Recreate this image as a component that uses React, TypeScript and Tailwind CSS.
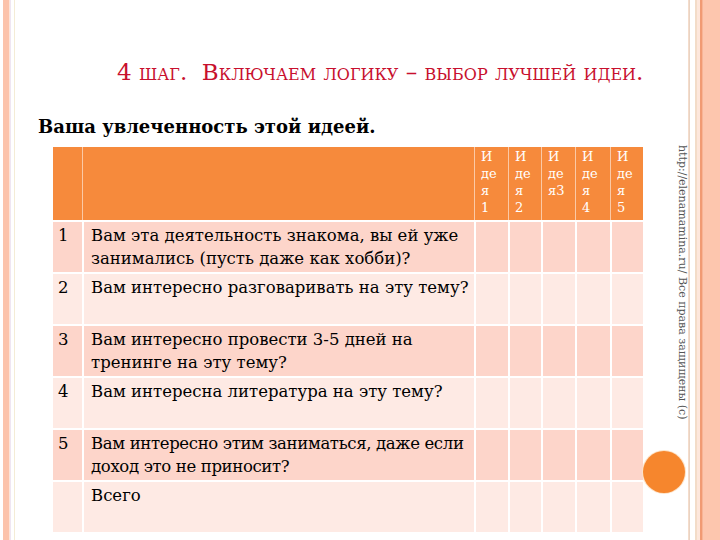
const rows = [
  { n: '1', lines: ['Вам эта деятельность знакома, вы ей уже', 'занимались (пусть даже как хобби)?'], dark: true, tight: false },
  { n: '2', lines: ['Вам интересно разговаривать на эту тему?'], dark: false, tight: false },
  { n: '3', lines: ['Вам интересно провести 3-5 дней на', 'тренинге на эту тему?'], dark: true, tight: false },
  { n: '4', lines: ['Вам интересна литература на эту тему?'], dark: false, tight: false },
  { n: '5', lines: ['Вам интересно этим заниматься, даже если', 'доход это не приносит?'], dark: true, tight: true },
  { n: '', lines: ['Всего'], dark: false, tight: false },
];

const ideas = [
  ['И', 'де', 'я', '1'],
  ['И', 'де', 'я', '2'],
  ['И', 'де', 'я3'],
  ['И', 'де', 'я', '4'],
  ['И', 'де', 'я', '5'],
];

const cols = 'grid grid-cols-[29px_392px_34px_33px_34px_35px_33px]';

const App = () => {
  return (
    <div
      className="flex h-[540px] w-[720px] overflow-hidden bg-white text-black"
      style={{ fontFamily: '"DejaVu Serif", "Liberation Serif", serif' }}
    >
      {/* left stripes */}
      <div className="flex h-full w-[16px] shrink-0">
        <div className="w-[3px] bg-white" />
        <div className="w-[6px] bg-[#fcc3ab]" />
        <div className="w-[1px] bg-[#fde3d8]" />
        <div className="w-[1px] bg-[#efe6f2]" />
        <div className="w-[3px] bg-white" />
        <div className="w-[1px] bg-[#f4ecd6]" />
      </div>

      <div className="flex flex-1 flex-col">
        <div className="pt-[57px] pl-[101px] text-[23px] leading-[30px] text-[#c8102e] [font-variant:small-caps]">
          4 шаг.&nbsp; Включаем логику – выбор лучшей идеи.
        </div>
        <div className="mt-[28px] pl-[22px] text-[18px] font-bold leading-[24px]">
          Ваша увлеченность этой идеей.
        </div>

        <div className="mt-[8px] flex pl-[37px]">
          <div className="w-[590px] text-[16.5px]">
            <div className={`${cols} h-[73px] bg-[#f68a3c] text-[13px] leading-[17px] text-white`}>
              <div />
              <div className="border-l border-[#fbc9a6]" />
              {ideas.map((lines, i) => (
                <div key={i} className="border-l border-[#fbc9a6] pl-[6px] pt-[1px]">
                  {lines.map((l, j) => (
                    <div key={j}>{l}</div>
                  ))}
                </div>
              ))}
            </div>
            {rows.map((r, i) => (
              <div
                key={i}
                className={`${cols} h-[52px] border-t-2 border-white leading-[23px] ${
                  r.dark ? 'bg-[#fdd5ca]' : 'bg-[#feeae4]'
                }`}
              >
                <div className="pl-[5px] pt-[2px]">{r.n}</div>
                <div
                  className={`border-l-2 border-white pl-[7px] pt-[2px] whitespace-nowrap ${
                    r.tight ? 'tracking-[-0.35px]' : ''
                  }`}
                >
                  {r.lines.map((l, j) => (
                    <div key={j}>{l}</div>
                  ))}
                </div>
                {ideas.map((_, j) => (
                  <div key={j} className="border-l-2 border-white" />
                ))}
              </div>
            ))}
          </div>

          <div className="flex w-[45px] flex-col">
            <div className="ml-[27px] mt-[-2px] h-[306px] text-[11px] leading-[12px] text-[#555] [writing-mode:vertical-rl]">
              http://elenamamina.ru/ Все права защищены (c)
            </div>
            <div className="h-[42px] w-[42px] rounded-full bg-[#f6862d] ring-1 ring-[#fde3c8]" />
          </div>
        </div>
      </div>

      {/* right stripes */}
      <div className="flex h-full w-[32px] shrink-0">
        <div className="w-[1px] bg-[#f4dccb]" />
        <div className="w-[1px] bg-[#e9d3c3]" />
        <div className="w-[5px] bg-white" />
        <div className="w-[2px] bg-[#f3dcc8]" />
        <div className="w-[3px] bg-[#fde7dc]" />
        <div className="w-[2px] bg-[#f19a73]" />
        <div className="w-[1px] bg-[#f8b496]" />
        <div className="flex-1 bg-[#fdc6ae]" />
      </div>
    </div>
  );
};

export default App;
